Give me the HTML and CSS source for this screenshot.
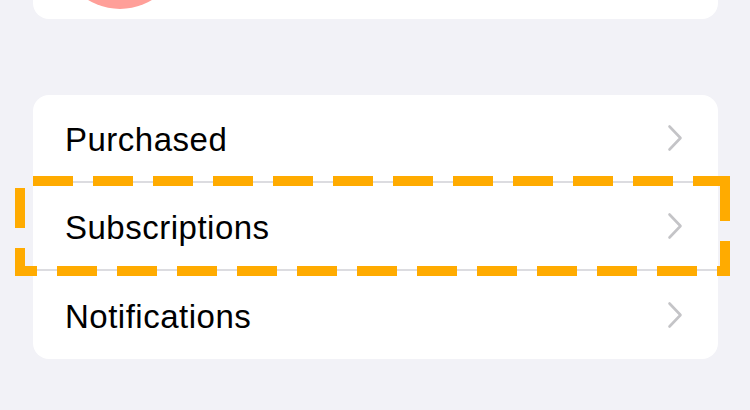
FILE: index.html
```html
<!DOCTYPE html>
<html lang="en">
<head>
  <meta charset="UTF-8">
  <meta name="viewport" content="width=device-width, initial-scale=1.0">
  <title>Settings</title>
  <link rel="stylesheet" href="styles.css">
</head>
<body>
  <div class="profile-card">
    <div class="avatar"></div>
  </div>

  <main class="group">
    <ul class="list">
      <li class="row">
        <span class="label">Purchased</span>
        <svg class="chevron" viewBox="0 0 16 28" width="16" height="28"><polyline points="2.5,2.5 13.5,14 2.5,25.5"/></svg>
      </li>
      <li class="row">
        <span class="label">Subscriptions</span>
        <svg class="chevron" viewBox="0 0 16 28" width="16" height="28"><polyline points="2.5,2.5 13.5,14 2.5,25.5"/></svg>
      </li>
      <li class="row">
        <span class="label">Notifications</span>
        <svg class="chevron" viewBox="0 0 16 28" width="16" height="28"><polyline points="2.5,2.5 13.5,14 2.5,25.5"/></svg>
      </li>
    </ul>

    <!-- marca de resaltado sobre "Subscriptions" -->
    <svg class="highlight" width="750" height="410" viewBox="0 0 750 410">
      <line x1="33" y1="181" x2="730" y2="181" stroke-dasharray="40 20"/>
      <line x1="725" y1="176" x2="725" y2="276" stroke-dasharray="45 20"/>
      <line x1="15" y1="271" x2="730" y2="271" stroke-dasharray="40 20" stroke-dashoffset="18"/>
      <line x1="20" y1="188" x2="20" y2="276" stroke-dasharray="40 20"/>
    </svg>
  </main>
</body>
</html>
```

FILE: styles.css
```css
* {
  margin: 0;
  padding: 0;
  box-sizing: border-box;
}
body {
  font-family: "Liberation Sans", Arial, sans-serif;
  background-color: #f2f2f7;
  width: 750px;
  height: 410px;
  overflow: hidden;
}
.profile-card {
  height: 19px;
  margin: 0 32px 0 33px;
  background-color: #fff;
  border-radius: 0 0 16px 16px;
  overflow: hidden;
}
.avatar {
  width: 122px;
  height: 122px;
  margin: -113px 0 0 26px;
  border-radius: 50%;
  background-color: #ff9f99;
}
.group {
  margin-top: 76px;
}
.list {
  list-style: none;
  margin: 0 32px 0 33px;
  background-color: #fff;
  border-radius: 16px;
  overflow: hidden;
}
.row {
  height: 88px;
  display: flex;
  align-items: center;
  justify-content: space-between;
  padding: 0 35px 0 32px;
  border-bottom: 2px solid #dcdce0;
}
.row:last-child {
  border-bottom: none;
}
.label {
  font-size: 33px;
  letter-spacing: 0.5px;
  color: #000;
  padding-top: 3px;
}
.chevron {
  fill: none;
  stroke: #c4c4c7;
  stroke-width: 2.6;
  stroke-linecap: round;
  stroke-linejoin: round;
}
.highlight {
  position: absolute;
  top: 0;
  left: 0;
  pointer-events: none;
}
.highlight line {
  stroke: #ffab00;
  stroke-width: 10;
}
```
